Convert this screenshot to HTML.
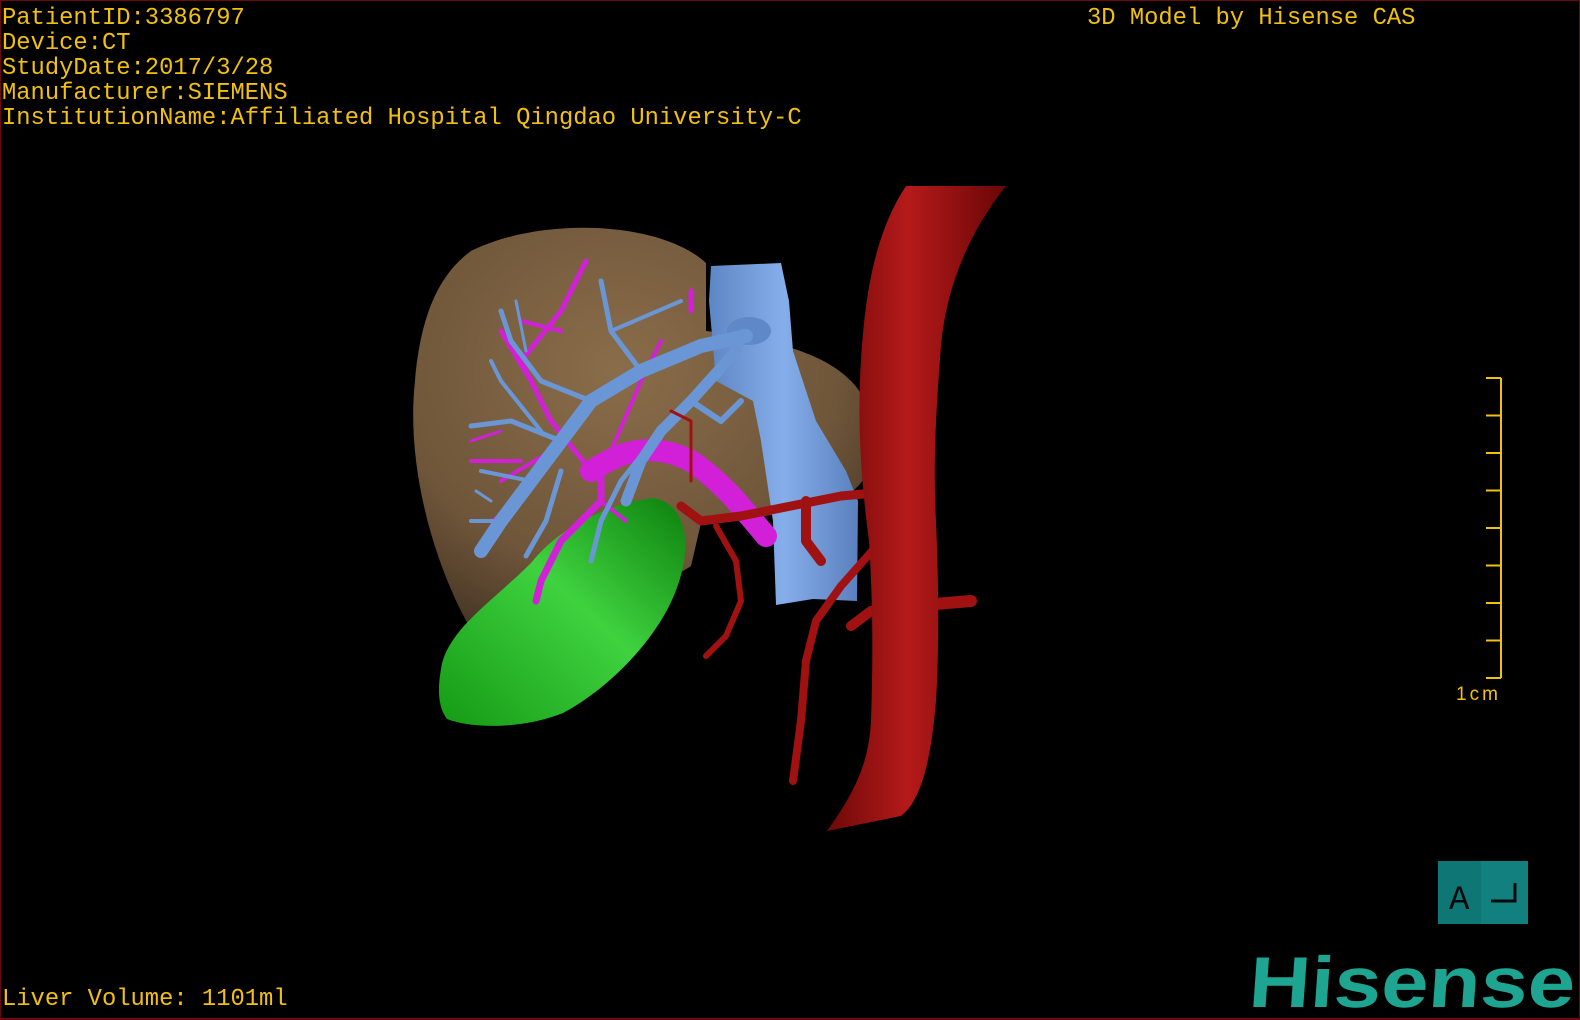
<!DOCTYPE html>
<html><head><meta charset="utf-8"><style>
html,body{margin:0;padding:0;background:#000;}
#w{position:relative;width:1580px;height:1020px;overflow:hidden;background:#000;box-sizing:border-box;border:1px solid #6a0a0a;border-bottom-width:2px;}
.t{position:absolute;left:1px;font-family:"Liberation Mono",monospace;font-size:23.8px;color:#f2c10e;white-space:pre;line-height:25px;}
svg{position:absolute;left:0;top:0;}
</style></head><body><div id="w">
<svg width="1580" height="1020" viewBox="0 0 1580 1020">
<defs>
<radialGradient id="lv" cx="0.45" cy="0.35" r="0.7"><stop offset="0" stop-color="#8a6d4a"/><stop offset="0.7" stop-color="#6f563a"/><stop offset="1" stop-color="#4a3826"/></radialGradient>
<linearGradient id="ao" x1="0" x2="1"><stop offset="0" stop-color="#6e0808"/><stop offset="0.45" stop-color="#b51a1a"/><stop offset="1" stop-color="#6a0606"/></linearGradient>
<linearGradient id="gb" x1="0" y1="1" x2="1" y2="0"><stop offset="0" stop-color="#159a15"/><stop offset="0.55" stop-color="#3fd23f"/><stop offset="1" stop-color="#0d800d"/></linearGradient>
<linearGradient id="iv" x1="0" x2="1"><stop offset="0" stop-color="#5d86c4"/><stop offset="0.5" stop-color="#86aeea"/><stop offset="1" stop-color="#5a80bd"/></linearGradient>
</defs>
<path d="M470 250 C540 215 660 220 705 262 L705 330 C790 340 845 360 864 400 L864 475 C850 505 800 512 700 522 L690 565 C660 585 600 605 472 632 C430 560 405 460 414 380 C420 310 440 272 470 250Z" fill="url(#lv)"/>
<path d="M440 668 C445 630 492 600 530 562 C562 522 612 502 652 497 C684 502 694 542 674 592 C654 642 604 690 562 712 C522 728 472 728 446 718 C436 705 437 685 440 668Z" fill="url(#gb)"/>
<path d="M710 265 L780 262 L788 300 L792 350 L815 420 L845 470 L857 500 L856 600 L812 598 L775 604 L772 520 L760 440 L752 400 L715 380 L708 300Z" fill="url(#iv)"/>
<ellipse cx="748" cy="330" rx="22" ry="14" fill="#5f88c8"/>
<g stroke="#d21fd8" fill="none" stroke-linecap="round" stroke-linejoin="round">
<path d="M590 470 C620 450 650 440 690 460 C720 480 740 505 765 535" stroke-width="22"/>
<path d="M600 470 L600 500 L585 515 L560 540 L540 580 L535 600" stroke-width="7"/>
<path d="M590 470 L550 420 L530 380 L500 330" stroke-width="5"/>
<path d="M550 420 L520 360 L560 310 L585 260" stroke-width="5"/>
<path d="M560 330 L520 320" stroke-width="4"/>
<path d="M610 450 L640 380 L660 340" stroke-width="4"/>
<path d="M520 460 L470 460" stroke-width="4"/>
<path d="M550 450 L500 480" stroke-width="4"/>
<path d="M500 430 L470 440" stroke-width="3"/>
<path d="M520 500 L490 520" stroke-width="3"/>
<path d="M690 310 L690 290" stroke-width="5"/>
<path d="M600 500 L625 520" stroke-width="4"/>
</g>
<g stroke="#6b96d6" fill="none" stroke-linecap="round" stroke-linejoin="round">
<path d="M745 335 L700 345 L640 370 L590 400 L560 440 L530 480 L500 520 L480 550" stroke-width="14"/>
<path d="M735 350 L690 400 L660 430 L640 460 L625 500" stroke-width="11"/>
<path d="M590 400 L540 380 L510 340 L500 310" stroke-width="5"/>
<path d="M640 370 L610 330 L600 280" stroke-width="5"/>
<path d="M610 330 L680 300" stroke-width="4"/>
<path d="M560 440 L510 420 L470 425" stroke-width="5"/>
<path d="M530 480 L480 470" stroke-width="4"/>
<path d="M540 430 L500 380 L490 360" stroke-width="4"/>
<path d="M500 520 L470 520" stroke-width="4"/>
<path d="M490 500 L475 490" stroke-width="3"/>
<path d="M660 430 L620 480 L600 520 L590 560" stroke-width="5"/>
<path d="M560 470 L545 520 L525 555" stroke-width="5"/>
<path d="M690 400 L720 420 L740 400" stroke-width="6"/>
<path d="M525 350 L515 300" stroke-width="3"/>
</g>
<g stroke="#a01212" fill="none" stroke-linecap="round" stroke-linejoin="round">
<path d="M895 490 L840 495 L790 505 L740 515 L700 520 L680 505" stroke-width="9"/>
<path d="M805 500 L805 540 L820 560" stroke-width="10"/>
<path d="M715 525 L735 560 L740 600 L725 635 L705 655" stroke-width="6"/>
<path d="M880 540 L840 585 L815 620 L805 660 L800 720 L792 780" stroke-width="8"/>
<path d="M910 605 L970 600" stroke-width="12"/>
<path d="M870 610 L850 625" stroke-width="10"/>
<path d="M690 480 L690 420 L670 410" stroke-width="3"/>
</g>
<path d="M905 185 L1005 185 C965 235 945 290 940 345 C935 410 932 460 935 520 C938 590 938 650 935 700 C930 760 920 800 900 815 L826 830 C855 790 868 760 870 720 C872 660 872 600 868 540 C860 480 856 420 860 360 C864 290 875 230 905 185Z" fill="url(#ao)"/>
<g stroke="#f2c10e" stroke-width="2" fill="none">
<path d="M1500 377 V677"/>
<path d="M1485 377H1500M1485 414.5H1500M1485 452H1500M1485 489.5H1500M1485 527H1500M1485 564.5H1500M1485 602H1500M1485 639.5H1500M1485 677H1500"/>
</g>
<text x="1455" y="699" font-family="Liberation Sans, sans-serif" font-size="19" fill="#f2c10e" letter-spacing="3">1cm</text>
<rect x="1437" y="860" width="90" height="63" fill="#138080"/>
<rect x="1437" y="860" width="43" height="63" fill="#0f7676"/>
<text x="1448" y="908" font-family="Liberation Mono, monospace" font-size="34" fill="#0a0a0a">A</text>
<path d="M1490 900 H1514 V882" stroke="#0a0a0a" stroke-width="3" fill="none"/>
<text x="1247" y="1006" font-family="Liberation Sans, sans-serif" font-weight="bold" font-size="72" fill="#1ea592" transform="skewX(-4) translate(70 0)" textLength="326" lengthAdjust="spacingAndGlyphs">Hisense</text>
</svg>
<div class="t" style="top:5px">PatientID:3386797
Device:CT
StudyDate:2017/3/28
Manufacturer:SIEMENS
InstitutionName:Affiliated Hospital Qingdao University-C</div>
<div class="t" style="top:5px;left:1086px">3D Model by Hisense CAS</div>
<div class="t" style="top:986px">Liver Volume: 1101ml</div>
</div></body></html>
